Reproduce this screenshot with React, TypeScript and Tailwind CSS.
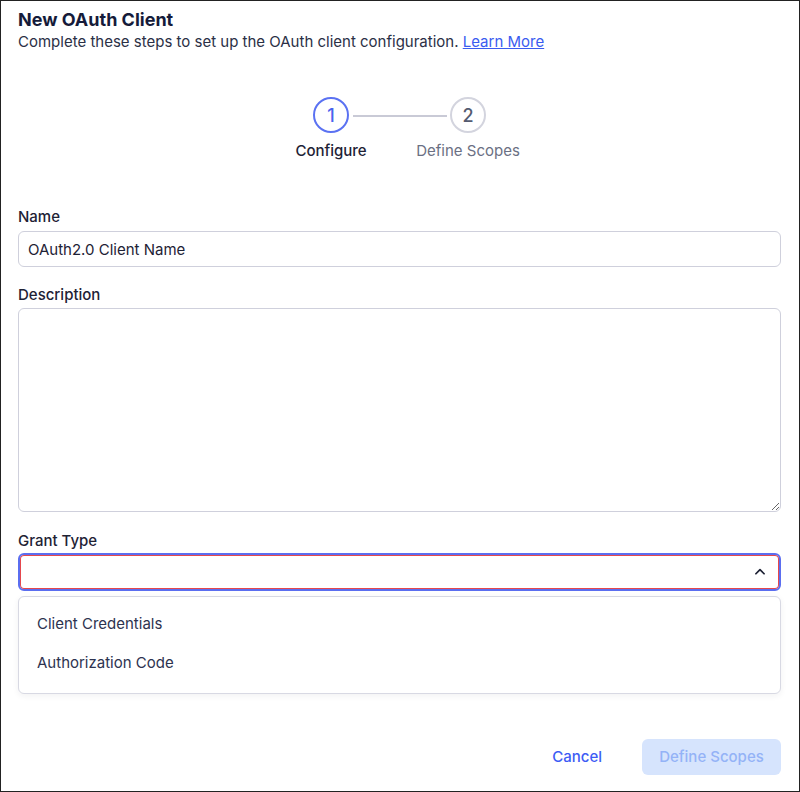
import React from 'react';

const steps = [
  { n: 1, label: 'Configure', active: true },
  { n: 2, label: 'Define Scopes', active: false },
];

const grantTypes = ['Client Credentials', 'Authorization Code'];

function Stepper() {
  return (
    <div className="flex justify-center">
      <div className="relative flex">
        <div className="absolute left-[90px] top-[18px] h-[2px] w-[94px] bg-[#c9cad6]" />
        {steps.map((s) => (
          <div key={s.n} className="flex w-[137px] flex-col items-center">
            <div
              className={
                s.active
                  ? 'flex h-9 w-9 items-center justify-center rounded-full border-2 border-[#5b72f2] bg-white text-[18px] font-medium text-[#4a63ee]'
                  : 'flex h-9 w-9 items-center justify-center rounded-full border-2 border-[#d3d4de] bg-white text-[18px] font-medium text-[#555b70]'
              }
            >
              {s.n}
            </div>
            <div
              className={
                s.active
                  ? 'mt-2 text-[15px] font-medium leading-5 text-[#1e2235]'
                  : 'mt-2 text-[15px] leading-5 text-[#6b7083]'
              }
            >
              {s.label}
            </div>
          </div>
        ))}
      </div>
    </div>
  );
}

export default function App() {
  return (
    <div
      className="flex h-[792px] w-[800px] flex-col border border-[#222] bg-white pl-[17px] pr-[18px] text-[#1e2235]"
      style={{ fontFamily: 'Inter, "Noto Sans", sans-serif' }}
    >
      <h1 className="mt-[8px] text-[18px] font-bold leading-[22px] text-[#151b3a]">New OAuth Client</h1>
      <p className="text-[15px] leading-[22px] text-[#2b3046]">
        Complete these steps to set up the OAuth client configuration.{' '}
        <a href="#" className="text-[#3a5cf0] underline">
          Learn More
        </a>
      </p>

      <div className="mt-[44px]">
        <Stepper />
      </div>

      <label className="mt-[46px] text-[15px] font-medium leading-5 text-[#1e2235]">Name</label>
      <input
        className="mt-[4px] h-9 w-full rounded-md border border-[#cfd0dc] px-[9px] text-[15px] text-[#1e2235] outline-none"
        defaultValue="OAuth2.0 Client Name"
      />

      <label className="mt-[18px] text-[15px] font-medium leading-5 text-[#1e2235]">Description</label>
      <textarea className="mt-[3px] h-[204px] w-full resize-y rounded-md border border-[#cfd0dc] px-[9px] py-2 text-[15px] outline-none" />

      <label className="mt-[19px] text-[15px] font-medium leading-5 text-[#1e2235]">Grant Type</label>
      <div className="mt-[2px] flex h-[38px] w-full items-center justify-end rounded-md border-2 border-[#5b6ef0] px-[12px] shadow-[inset_0_0_0_1px_#e5484d]">
        <svg width="14" height="14" viewBox="0 0 24 24" fill="none" stroke="#1e2235" strokeWidth="3" strokeLinecap="round" strokeLinejoin="round">
          <path d="M5 15l7-7 7 7" />
        </svg>
      </div>

      <div className="mt-[5px] rounded-md border border-[#d8d9e3] bg-white pt-[8px] pb-[10px] shadow-[0_2px_6px_rgba(30,34,53,0.06)]">
        {grantTypes.map((g) => (
          <div key={g} className="flex h-[39px] items-center pl-[18px] text-[15px] text-[#2d3350]">
            {g}
          </div>
        ))}
      </div>

      <div className="mt-auto mb-[16px] flex items-center justify-end gap-6">
        <button className="h-9 px-4 text-[15px] font-medium text-[#3d5cf5]">Cancel</button>
        <button className="h-9 w-[139px] rounded-md bg-[#d6e4fd] text-[15px] font-medium text-[#94b3f7]">Define Scopes</button>
      </div>
    </div>
  );
}
